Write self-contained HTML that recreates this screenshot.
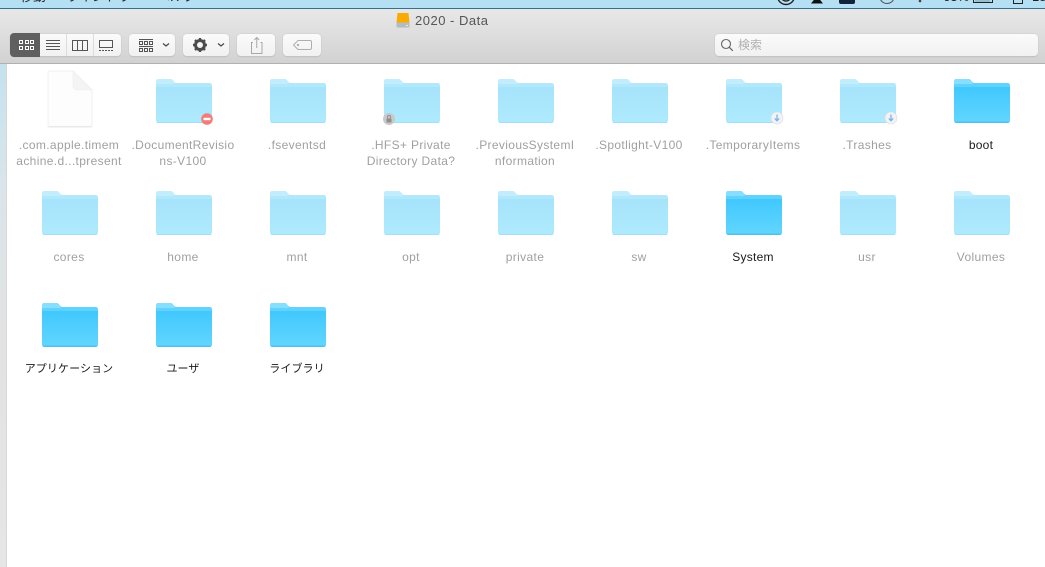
<!DOCTYPE html>
<html lang="ja">
<head>
<meta charset="utf-8">
<title>2020 - Data</title>
<style>
html,body{margin:0;padding:0;width:1045px;height:567px;overflow:hidden;background:#fff;font-family:"Liberation Sans","Noto Sans CJK JP",sans-serif}
#stage{position:relative;width:1045px;height:567px;overflow:hidden;background:#fff}
.abs{position:absolute}
#menu{left:0;top:0;width:1045px;height:8px;background:#b5e0f3;overflow:hidden}
#menuline{left:0;top:8px;width:1045px;height:1px;background:#37708f}
.mt{position:absolute;top:-11px;font-size:13px;line-height:16px;color:#222;white-space:nowrap}
#bar{left:0;top:9px;width:1045px;height:54px;background:linear-gradient(#e8e8e8,#d2d2d2)}
#barline{left:0;top:63px;width:1045px;height:1px;background:#b1b1b1}
#strip{left:0;top:64px;width:6px;height:503px;background:linear-gradient(#c4e2ef 0,#d9e5ea 120px,#e2e2e2 280px,#e6e6e6 100%)}
#stripline{left:6px;top:64px;width:1px;height:503px;background:#d8d8d8}
#title{left:415px;top:13px;font-size:13px;line-height:15px;color:#555;white-space:nowrap;letter-spacing:.5px;filter:blur(.25px)}
.btn{position:absolute;top:34px;height:22px;background:linear-gradient(#fbfbfb,#f1f1f1);border-radius:4px;box-shadow:0 0 0 .5px #ccc,0 1px 1px #b5b5b5}
.lb{position:absolute;width:114px;text-align:center;font-size:12px;line-height:16px;color:#a0a0a0;white-space:nowrap;letter-spacing:.35px;filter:blur(.3px)}
.lb.on{color:#1a1a1a;letter-spacing:.25px}
.lb.jp{font-size:11px;letter-spacing:.1px}
svg{display:block}
.ic{position:absolute;overflow:visible}
.f{filter:blur(.35px)}
</style>
</head>
<body>
<div id="stage">
<svg width="0" height="0" style="position:absolute">
<defs>
<linearGradient id="fa" x1="0" y1="0" x2="0" y2="1"><stop offset="0" stop-color="#a6e4fb"/><stop offset="1" stop-color="#afeafe"/></linearGradient>
<linearGradient id="fb" x1="0" y1="0" x2="0" y2="1"><stop offset="0" stop-color="#41c8fe"/><stop offset="1" stop-color="#62d6ff"/></linearGradient>
<symbol id="dim" viewBox="0 0 58 48">
<path d="M1 12 V3.500 Q1 1 3.500 1 H15 Q17.500 1 18.500 3 Q19.500 5 22 5 H54.500 Q57 5 57 7.500 V12Z" fill="#b2e8fb"/>
<path d="M1 6 V3.500 Q1 1 3.500 1 H15 Q17.500 1 18.500 3 Q19 4.500 20 6Z" fill="#c2edfc"/>
<path d="M1 9 H57 V42.500 Q57 45 54.500 45 H3.500 Q1 45 1 42.500Z" fill="url(#fa)"/>
<path d="M1.800 44 H56.200 Q56 45 54.500 45 H3.500 Q2 45 1.800 44Z" fill="#a2dff6"/>
</symbol>
<symbol id="act" viewBox="0 0 58 48">
<path d="M1 12 V3.500 Q1 1 3.500 1 H15 Q17.500 1 18.500 3 Q19.500 5 22 5 H54.500 Q57 5 57 7.500 V12Z" fill="#5fd2fd"/>
<path d="M1 6 V3.500 Q1 1 3.500 1 H15 Q17.500 1 18.500 3 Q19 4.500 20 6Z" fill="#86dfff"/>
<path d="M1 9 H57 V42.500 Q57 45 54.500 45 H3.500 Q1 45 1 42.500Z" fill="url(#fb)"/>
<path d="M1.800 43.500 H56.200 Q56 45 54.500 45 H3.500 Q2 45 1.800 43.500Z" fill="#4cc4ea"/>
</symbol>
<symbol id="dl" viewBox="0 0 14 14">
<circle cx="7" cy="7" r="6" fill="#f1f3f5" stroke="#dcdcdc" stroke-width=".6"/>
<path d="M7 3.500 V9.500 M4.800 7.400 L7 9.800 L9.200 7.400" fill="none" stroke="#7fb2ea" stroke-width="1.300"/>
</symbol>
</defs>
</svg>

<div class="abs" id="menu">
<span class="mt" style="left:20px">移動</span>
<span class="mt" style="left:66px">ウインドウ</span>
<span class="mt" style="left:157px">ヘルプ</span>
<svg class="ic" style="left:770px;top:0" width="275" height="8" viewBox="0 0 275 8" fill="none">
<circle cx="16" cy="-4" r="8.500" stroke="#222" stroke-width="1.400"/>
<circle cx="16" cy="-4" r="5" stroke="#222" stroke-width="1.400"/>
<path d="M41 3.500 L47 -4 L53 3.500Z" fill="#111"/>
<rect x="69" y="-6" width="16" height="10" rx="2" fill="#10233a"/>
<path d="M110 -3 A7 6.500 0 0 0 124 -3" stroke="#555" stroke-width="1.100"/>
<circle cx="150" cy="1" r="1.300" fill="#444"/>
<rect x="203.500" y="-6" width="19" height="8.500" stroke="#222"/>
<rect x="205" y="-6" width="15" height="8" fill="#333" opacity=".2"/>
<path d="M243.500 -3 V3.500 H252.500 V-3" stroke="#222"/>
</svg>
<span class="mt" style="left:943px">63%</span>
<span class="mt" style="left:1032px">18</span>
</div>
<div class="abs" id="menuline"></div>
<div class="abs" id="bar"></div>
<div class="abs" id="barline"></div>
<div class="abs" id="strip"></div>
<div class="abs" id="stripline"></div>

<svg class="ic f" style="left:396px;top:12px" width="14" height="16" viewBox="0 0 14 16">
<path d="M1.500 1 H12.500 L13.500 11 H.5Z" fill="#fbab00"/>
<rect x=".5" y="10.500" width="13" height="5" rx="1" fill="#b3bcc1"/>
<rect x="10" y="13" width="2" height="1" fill="#eee"/>
</svg>
<div class="abs" id="title">2020 - Data</div>

<!-- view switcher -->
<div class="btn" style="left:10px;width:111px"></div>
<div class="abs" style="left:10px;top:33px;width:30px;height:24px;background:#5f5f5f;border-radius:4px 0 0 4px"></div>
<div class="abs" style="left:66px;top:34px;width:1px;height:22px;background:#dcdcdc"></div>
<div class="abs" style="left:93px;top:34px;width:1px;height:22px;background:#dcdcdc"></div>
<svg class="ic" style="left:10px;top:33px" width="112" height="24" viewBox="0 0 112 24" fill="none">
<g stroke="#fff" stroke-width="1"><rect x="9.500" y="7.500" width="3" height="3"/><rect x="15.500" y="7.500" width="3" height="3"/><rect x="20.500" y="7.500" width="3" height="3"/><rect x="9.500" y="13.500" width="3" height="3"/><rect x="15.500" y="13.500" width="3" height="3"/><rect x="20.500" y="13.500" width="3" height="3"/></g>
<path d="M36 7.500 H50 M36 10.500 H50 M36 13.500 H50 M36 16.500 H50" stroke="#555" stroke-width="1"/>
<rect x="62.500" y="7.500" width="15" height="10" stroke="#555"/>
<path d="M67.500 7.500 V17.500 M72.500 7.500 V17.500" stroke="#555"/>
<rect x="89.500" y="7.500" width="13" height="7" stroke="#555"/>
<path d="M89 17.500 H103" stroke="#555" stroke-dasharray="2 1"/>
</svg>

<!-- arrange -->
<div class="btn" style="left:129px;width:46px"></div>
<svg class="ic" style="left:129px;top:34px" width="46" height="22" viewBox="0 0 46 22" fill="none" stroke="#555">
<path d="M10 5.500 H24" />
<rect x="10.500" y="7.500" width="3" height="3"/><rect x="15.500" y="7.500" width="3" height="3"/><rect x="20.500" y="7.500" width="3" height="3"/>
<path d="M10 12.500 H24"/>
<rect x="10.500" y="14.500" width="3" height="3"/><rect x="15.500" y="14.500" width="3" height="3"/><rect x="20.500" y="14.500" width="3" height="3"/>
<path d="M34 9.500 L37 12 L40 9.500" stroke="#444" stroke-width="1.200"/>
</svg>

<!-- action -->
<div class="btn" style="left:183px;width:46px"></div>
<svg class="ic" style="left:183px;top:34px" width="46" height="22" viewBox="0 0 46 22" fill="none">
<circle cx="17" cy="11" r="4.500" stroke="#4c4c4c" stroke-width="3"/>
<path d="M17 4 V18 M10 11 H24 M12 6 L22 16 M22 6 L12 16" stroke="#4c4c4c" stroke-width="2.400" stroke-dasharray="2.200 9.600 2.200 0"/>
<path d="M35 9.500 L38 12 L41 9.500" stroke="#444" stroke-width="1.200"/>
</svg>

<!-- share -->
<div class="btn" style="left:237px;width:38px"></div>
<svg class="ic" style="left:237px;top:34px" width="38" height="22" viewBox="0 0 38 22" fill="none" stroke="#a8a8a8">
<path d="M16 8.500 H14.500 V19.500 H25 V8.500 H23.500"/>
<path d="M19.750 14 V3.500 M17.250 6 L19.750 3.500 L22.250 6"/>
</svg>

<!-- tag -->
<div class="btn" style="left:283px;width:38px"></div>
<svg class="ic" style="left:283px;top:34px" width="38" height="22" viewBox="0 0 38 22" fill="none" stroke="#aeaeae">
<path d="M10.500 11 L15 6.500 H27 Q28.500 6.500 28.500 8 V14 Q28.500 15.500 27 15.500 H15Z"/>
<circle cx="15" cy="11" r=".7"/>
</svg>

<!-- search -->
<div class="btn" style="left:715px;width:323px;border-radius:4px"></div>
<svg class="ic" style="left:720px;top:38px" width="14" height="14" viewBox="0 0 14 14" fill="none" stroke="#666">
<circle cx="6" cy="6" r="4.500" stroke-width="1.100"/><path d="M9.300 9.300 L12.800 12.800" stroke-width="1.300"/>
</svg>
<div class="abs" style="left:738px;top:37px;font-size:12px;line-height:16px;color:#b0b0b0;white-space:nowrap;filter:blur(.25px)">検索</div>

<!-- doc -->
<svg class="ic f" style="left:47px;top:70px" width="46" height="59" viewBox="0 0 46 59">
<path d="M2 1 H26 L45 20 V56 Q45 57 44 57 H2 Q1 57 1 56 V2 Q1 1 2 1Z" fill="#fdfdfd" stroke="#f0f0f0" stroke-width="1"/>
<path d="M1.500 56.800 H44.500" stroke="#e4e4e4"/>
<path d="M26 1 V15 Q26 20 31 20 H45Z" fill="#f4f4f4" stroke="#eeeeee" stroke-width=".6"/>
</svg>

<!-- row 1 folders -->
<svg class="ic f" style="left:155px;top:78px" width="58" height="48"><use href="#dim"/></svg>
<svg class="ic f" style="left:269px;top:78px" width="58" height="48"><use href="#dim"/></svg>
<svg class="ic f" style="left:383px;top:78px" width="58" height="48"><use href="#dim"/></svg>
<svg class="ic f" style="left:497px;top:78px" width="58" height="48"><use href="#dim"/></svg>
<svg class="ic f" style="left:611px;top:78px" width="58" height="48"><use href="#dim"/></svg>
<svg class="ic f" style="left:725px;top:78px" width="58" height="48"><use href="#dim"/></svg>
<svg class="ic f" style="left:839px;top:78px" width="58" height="48"><use href="#dim"/></svg>
<svg class="ic f" style="left:953px;top:78px" width="58" height="48"><use href="#act"/></svg>

<!-- badges -->
<svg class="ic f" style="left:200px;top:112px" width="14" height="14" viewBox="0 0 14 14">
<circle cx="7" cy="7" r="5.800" fill="#f47c78"/><rect x="3.500" y="5.800" width="7" height="2.400" fill="#fff"/>
</svg>
<svg class="ic f" style="left:382px;top:112px" width="14" height="14" viewBox="0 0 14 14">
<circle cx="7" cy="7" r="6" fill="#c9c9c9"/>
<rect x="4.500" y="6.500" width="5" height="4" rx=".5" fill="#8f8f8f"/>
<path d="M5.500 6.500 V5 A1.500 1.500 0 0 1 8.500 5 V6.500" fill="none" stroke="#8f8f8f"/>
</svg>
<svg class="ic f" style="left:770px;top:111px" width="14" height="14"><use href="#dl"/></svg>
<svg class="ic f" style="left:884px;top:111px" width="14" height="14"><use href="#dl"/></svg>

<!-- row 2 folders -->
<svg class="ic f" style="left:41px;top:190px" width="58" height="48"><use href="#dim"/></svg>
<svg class="ic f" style="left:155px;top:190px" width="58" height="48"><use href="#dim"/></svg>
<svg class="ic f" style="left:269px;top:190px" width="58" height="48"><use href="#dim"/></svg>
<svg class="ic f" style="left:383px;top:190px" width="58" height="48"><use href="#dim"/></svg>
<svg class="ic f" style="left:497px;top:190px" width="58" height="48"><use href="#dim"/></svg>
<svg class="ic f" style="left:611px;top:190px" width="58" height="48"><use href="#dim"/></svg>
<svg class="ic f" style="left:725px;top:190px" width="58" height="48"><use href="#act"/></svg>
<svg class="ic f" style="left:839px;top:190px" width="58" height="48"><use href="#dim"/></svg>
<svg class="ic f" style="left:953px;top:190px" width="58" height="48"><use href="#dim"/></svg>

<!-- row 3 folders -->
<svg class="ic f" style="left:41px;top:302px" width="58" height="48"><use href="#act"/></svg>
<svg class="ic f" style="left:155px;top:302px" width="58" height="48"><use href="#act"/></svg>
<svg class="ic f" style="left:269px;top:302px" width="58" height="48"><use href="#act"/></svg>

<!-- labels row 1 -->
<div class="lb" style="left:12px;top:137px">.com.apple.timem<br>achine.d...tpresent</div>
<div class="lb" style="left:126px;top:137px">.DocumentRevisio<br>ns-V100</div>
<div class="lb" style="left:240px;top:137px">.fseventsd</div>
<div class="lb" style="left:354px;top:137px">.HFS+ Private<br>Directory Data?</div>
<div class="lb" style="left:468px;top:137px">.PreviousSystemI<br>nformation</div>
<div class="lb" style="left:582px;top:137px">.Spotlight-V100</div>
<div class="lb" style="left:696px;top:137px">.TemporaryItems</div>
<div class="lb" style="left:810px;top:137px">.Trashes</div>
<div class="lb on" style="left:924px;top:137px">boot</div>
<!-- labels row 2 -->
<div class="lb" style="left:12px;top:249px">cores</div>
<div class="lb" style="left:126px;top:249px">home</div>
<div class="lb" style="left:240px;top:249px">mnt</div>
<div class="lb" style="left:354px;top:249px">opt</div>
<div class="lb" style="left:468px;top:249px">private</div>
<div class="lb" style="left:582px;top:249px">sw</div>
<div class="lb on" style="left:696px;top:249px">System</div>
<div class="lb" style="left:810px;top:249px">usr</div>
<div class="lb" style="left:924px;top:249px">Volumes</div>
<!-- labels row 3 -->
<div class="lb on jp" style="left:12px;top:361px">アプリケーション</div>
<div class="lb on jp" style="left:126px;top:361px">ユーザ</div>
<div class="lb on jp" style="left:240px;top:361px">ライブラリ</div>
</div>
</body>
</html>
